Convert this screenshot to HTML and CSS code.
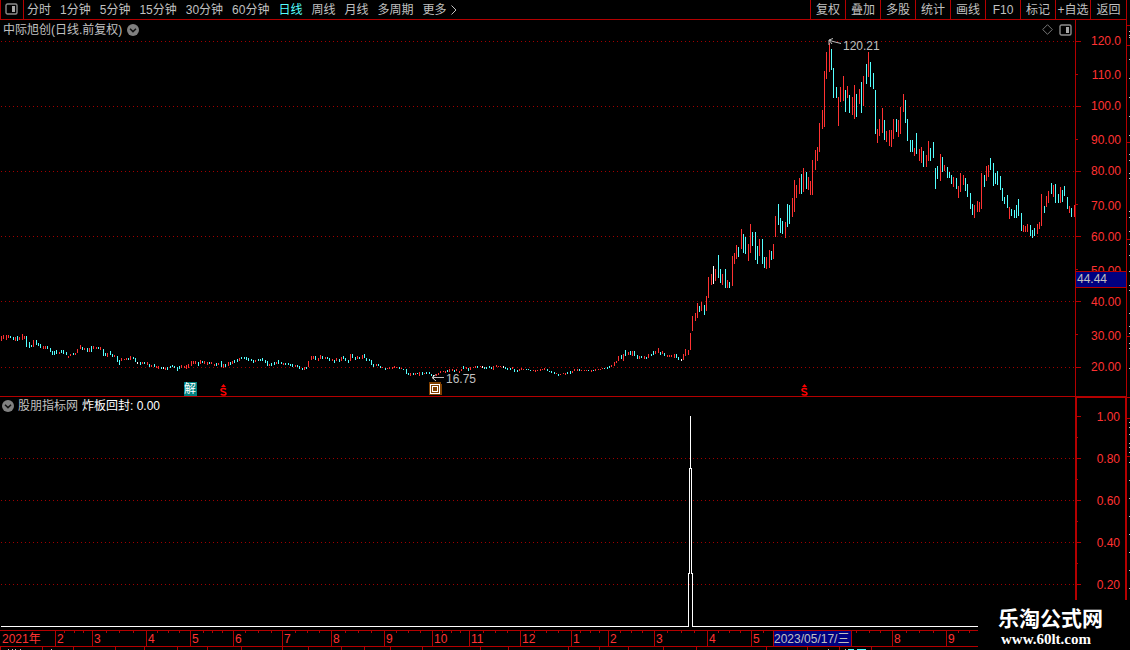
FILE: index.html
```html
<!DOCTYPE html>
<html lang="zh-CN">
<head>
<meta charset="utf-8">
<title>中际旭创 日线</title>
<link rel="stylesheet" href="styles.css">
</head>
<body>
<div class="terminal">
  <header class="toolbar">
    <button class="layout-toggle" type="button" aria-label="布局">
      <svg width="13" height="12" viewBox="0 0 13 12"><rect x="1" y="1" width="11" height="10" rx="1.5" fill="none" stroke="#8c8c8c" stroke-width="1.4"/><rect x="7" y="3" width="3" height="6" fill="#a8a8a8"/></svg>
    </button>
    <nav class="periods">
      <button type="button">分时</button>
      <button type="button">1分钟</button>
      <button type="button">5分钟</button>
      <button type="button">15分钟</button>
      <button type="button">30分钟</button>
      <button type="button">60分钟</button>
      <button type="button" class="active">日线</button>
      <button type="button">周线</button>
      <button type="button">月线</button>
      <button type="button">多周期</button>
      <button type="button" class="more">更多<svg width="6" height="10" viewBox="0 0 6 10"><path d="M.5 .5 5 5 .5 9.500" fill="none" stroke="#c0c0c0"/></svg></button>
    </nav>
    <div class="tools">
      <button type="button">复权</button>
      <button type="button">叠加</button>
      <button type="button">多股</button>
      <button type="button">统计</button>
      <button type="button">画线</button>
      <button type="button">F10</button>
      <button type="button">标记</button>
      <button type="button">+自选</button>
      <button type="button">返回</button>
    </div>
  </header>

  <main class="price">
    <svg class="plot" viewBox="0 20 1075 376" preserveAspectRatio="none" shape-rendering="crispEdges">
      <path class="grid" d="M1 41.500H1075M1 106.500H1075M1 171.500H1075M1 236.500H1075M1 301.500H1075M1 367.500H1075"/>
      <path id="up" fill="#ff3232"/>
      <path id="down" fill="#54ffff"/>
      <path id="flat" fill="#ffffff"/>
    </svg>
    <div class="caption">
      <h1>中际旭创(日线.前复权)</h1>
      <button class="round" type="button" aria-label="展开"><svg width="12" height="12" viewBox="0 0 12 12"><circle cx="6" cy="6" r="6" fill="#808080"/><path d="M3 4.800 6 7.600 9 4.800" fill="none" stroke="#111" stroke-width="1.500"/></svg></button>
      <div class="corner">
        <svg width="11" height="11" viewBox="0 0 11 11"><path d="M5.500 .7 10.300 5.500 5.500 10.300 .7 5.500Z" fill="none" stroke="#777"/></svg>
        <svg width="13" height="12" viewBox="0 0 13 12"><rect x="1" y="1" width="11" height="10" rx="1.500" fill="none" stroke="#8c8c8c" stroke-width="1.400"/><rect x="7" y="3" width="3" height="6" fill="#a8a8a8"/></svg>
      </div>
    </div>
    <div class="note high"><svg width="13" height="8" viewBox="0 0 13 8" fill="none" stroke="#c0c0c0"><path d="M1 2 5 3.500 13 5.500M1 7V2L5 .5M1 2 4 6"/></svg>120.21</div>
    <div class="note low"><svg width="13" height="8" viewBox="0 0 13 8" fill="none" stroke="#c0c0c0"><path d="M1 3.500H13M5 .5 1 3.500 5 7"/></svg>16.75</div>
    <span class="mark unlock">解</span>
    <svg class="mark dollar first" viewBox="0 0 7 12"><path d="M3.500 0 6 3H1Z" fill="#f00"/><path d="M6 5.500C5 4 1 4 1 6S6 7.500 6 9.500 2 11.500 1 10" fill="none" stroke="#f00" stroke-width="1.600"/></svg>
    <svg class="mark dollar second" viewBox="0 0 7 12"><path d="M3.500 0 6 3H1Z" fill="#f00"/><path d="M6 5.500C5 4 1 4 1 6S6 7.500 6 9.500 2 11.500 1 10" fill="none" stroke="#f00" stroke-width="1.600"/></svg>
    <svg class="mark report" viewBox="0 0 13 13" shape-rendering="crispEdges"><path d="M0 0H12V2H13V13H0Z" fill="#804000"/><path d="M1.500 2.500H10.500V11.500H1.500ZM3.500 4.500H8.500V9.500H3.500Z" fill="none" stroke="#fff"/></svg>
  </main>

  <aside class="scale price-scale">
    <svg class="plot" viewBox="1076 20 50 376" preserveAspectRatio="none" shape-rendering="crispEdges" stroke="#b40000"><path d="M1076 41.500h5M1076 106.500h5M1076 171.500h5M1076 236.500h5M1076 301.500h5M1076 367.500h5M1076 74.500h2M1076 139.500h2M1076 204.500h2M1076 269.500h2M1076 334.500h2"/></svg>
    <ol class="prices">
      <li>120.0</li><li>110.0</li><li>100.0</li><li>90.00</li><li>80.00</li><li>70.00</li><li>60.00</li><li>50.00</li><li>40.00</li><li>30.00</li><li>20.00</li>
    </ol>
    <output class="cursor-price">44.44</output>
  </aside>

  <section class="indicator">
    <svg class="plot" viewBox="0 397 1075 233" preserveAspectRatio="none" shape-rendering="crispEdges" fill="none">
      <path class="grid" d="M1 458.500H1075M1 500.500H1075M1 542.500H1075M1 584.500H1075"/>
      <path stroke="#fff" d="M1 626.500H688.500V573.500H689.500V468.500H690.500V416M690.500 468.500H691.500V573.500H692.500V626.500H1075"/>
    </svg>
    <div class="caption">
      <button class="round" type="button" aria-label="指标菜单"><svg width="12" height="12" viewBox="0 0 12 12"><circle cx="6" cy="6" r="6" fill="#808080"/><path d="M3 4.800 6 7.600 9 4.800" fill="none" stroke="#111" stroke-width="1.500"/></svg></button>
      <h2>股朋指标网</h2>
      <span class="reading">炸板回封: 0.00</span>
    </div>
  </section>

  <aside class="scale indicator-scale">
    <svg class="plot" viewBox="1075 396 52 234" preserveAspectRatio="none" shape-rendering="crispEdges" stroke="#b40000"><path d="M1077 416.500h4M1077 458.500h4M1077 500.500h4M1077 542.500h4M1077 584.500h4M1077 437.500h1M1077 479.500h1M1077 521.500h1M1077 563.500h1"/></svg>
    <ol class="levels"><li>1.00</li><li>0.80</li><li>0.60</li><li>0.40</li><li>0.20</li></ol>
  </aside>

  <div class="dates">
    <svg class="plot" viewBox="0 631 1127 15" preserveAspectRatio="none" shape-rendering="crispEdges" stroke="#b40000"><path id="day-ticks"/></svg>
    <ol class="months">
      <li>2021年</li><li>2</li><li>3</li><li>4</li><li>5</li><li>6</li><li>7</li><li>8</li><li>9</li><li>10</li><li>11</li><li>12</li><li>1</li><li>2</li><li>3</li><li>4</li><li>5</li><li class="picked">2023/05/17/三</li><li></li><li>8</li><li>9</li>
    </ol>
  </div>

  <div class="next-row">
    <svg class="plot" viewBox="0 647 1127 3" preserveAspectRatio="none" shape-rendering="crispEdges"><path id="tab-ticks" stroke="#b40000"/><path d="M8.500 649v1M12.500 649v1M15.500 649v1M20.500 649v1M51.500 649v1M828.500 649v1M845.500 649v1" stroke="#c0c0c0"/><path d="M848 649.500h6M857 649.500h9" stroke="#54ffff"/></svg>
  </div>

  <div class="edge">
    <svg class="plot" viewBox="1127 0 3 650" preserveAspectRatio="none" shape-rendering="crispEdges"><path id="edge-red" stroke="#b40000"/><path id="edge-white" stroke="#c0c0c0"/></svg>
  </div>

  <footer class="brand">
    <strong>乐淘公式网</strong>
    <a href="#">www.60lt.com</a>
  </footer>
</div>
<script src="chart.js"></script>
</body>
</html>
```
FILE: styles.css
```css
* {
  box-sizing: border-box;
}

body {
  margin: 0;
  background: #000;
  color: #c0c0c0;
  font: 12px/16px "Liberation Sans", "Noto Sans CJK SC", sans-serif;
}

button {
  margin: 0;
  padding: 0;
  border: 0;
  background: none;
  color: inherit;
  font: inherit;
  white-space: nowrap;
}

ol {
  margin: 0;
  padding: 0;
  list-style: none;
}

h1,
h2 {
  margin: 0;
  font-size: 12px;
  font-weight: normal;
}

svg {
  display: block;
  flex: none;
}

.terminal {
  position: relative;
  display: grid;
  grid-template-columns: 1fr 52px 3px;
  grid-template-rows: 20px 376fr 234fr 17px 3px;
  height: 100vh;
  min-height: 400px;
  overflow: hidden;
}

.toolbar {
  grid-column: 1 / 3;
  display: flex;
  border-right: 1px solid #b40000;
  border-bottom: 1px solid #b40000;
}

.layout-toggle {
  display: flex;
  width: 24px;
  padding: 3px 0 0 4px;
  border-left: 1px solid #b40000;
  border-right: 1px solid #b40000;
}

.periods {
  display: flex;
  gap: 9px;
  flex: 1;
  padding-left: 3px;
}

.periods .active {
  color: #54ffff;
}

.more {
  display: flex;
  align-items: center;
  gap: 4px;
}

.tools {
  display: flex;
}

.tools button {
  width: 35px;
  border-left: 1px solid #b40000;
}

.tools button:last-child {
  width: 36px;
}

.price,
.scale,
.indicator,
.dates,
.next-row,
.edge {
  position: relative;
  min-height: 0;
}

.plot {
  position: absolute;
  inset: 0;
  width: 100%;
  height: 100%;
}

.grid {
  stroke: #a00000;
  stroke-dasharray: 1 3;
}

.caption {
  position: relative;
  display: flex;
  align-items: center;
  height: 19px;
  padding-left: 3px;
  gap: 5px;
}

.corner {
  display: flex;
  align-items: center;
  gap: 6px;
  margin-left: auto;
  padding-right: 3px;
}

.note {
  position: absolute;
  display: flex;
  gap: 2px;
}

.high {
  left: 828px;
  top: 18px;
}

.low {
  left: 431px;
  top: 351px;
}

.low svg {
  margin-top: 3px;
}

.mark {
  position: absolute;
}

.unlock {
  left: 184px;
  bottom: 0;
  width: 13px;
  height: 14px;
  background: #008080;
  color: #fff;
  line-height: 14px;
}

.dollar {
  bottom: 0;
  width: 7px;
  height: 12px;
}

.first {
  left: 220px;
}

.second {
  left: 801px;
}

.report {
  left: 429px;
  bottom: 1px;
  width: 13px;
  height: 13px;
}

.scale {
  color: #ff3232;
  text-align: right;
}

.price-scale {
  border-left: 1px solid #b40000;
  border-right: 1px solid #b40000;
}

.scale ol {
  display: flex;
  flex-direction: column;
  height: 100%;
  padding-right: 5px;
}

.scale li {
  display: flex;
  flex: 1;
  align-items: center;
  justify-content: flex-end;
}

.prices {
  padding-top: 5px;
  padding-bottom: 13px;
}

.prices li:nth-child(even) {
  padding-top: 3px;
}

.cursor-price {
  position: absolute;
  left: 0;
  right: 0;
  top: 251px;
  padding-left: 1px;
  border-top: 1px solid #b40000;
  border-bottom: 1px solid #b40000;
  background: #000080;
  color: #c0c0c0;
  line-height: 15px;
  text-align: left;
}

.indicator {
  border-top: 1px solid #b40000;
}

.indicator .caption {
  height: 17px;
  padding-left: 2px;
  gap: 4px;
}

.reading {
  color: #fff;
}

.indicator-scale {
  border: 2px solid #b40000;
  border-bottom: 0;
}

.indicator-scale .plot {
  inset: -2px;
  width: calc(100% + 4px);
  height: calc(100% + 2px);
}

.levels {
  margin-top: -2px;
  padding-bottom: 22px;
}

.dates {
  grid-column: 1 / 3;
  border-top: 1px solid #b40000;
  border-bottom: 1px solid #b40000;
}

.months {
  position: relative;
  display: grid;
  grid-template-columns: 55fr 37fr 54fr 44fr 43fr 49fr 49fr 53fr 48fr 37fr 51fr 51fr 37fr 46fr 53fr 44fr 22fr 78fr 41fr 54fr 181fr;
  height: 15px;
  color: #ff3232;
  line-height: 17px;
  white-space: nowrap;
}

.months li {
  height: 15px;
  padding-left: 1px;
  border-left: 1px solid #b40000;
}

.months li:first-child {
  border-left-color: transparent;
}

.months .picked {
  padding-left: 0;
  background: #000080;
  color: #c0c0c0;
}

.next-row {
  grid-column: 1 / 3;
}

.edge {
  grid-column: 3;
  grid-row: 1 / 6;
}

.brand {
  position: absolute;
  right: 0;
  bottom: 0;
  display: flex;
  flex-direction: column;
  width: 152px;
  height: 50px;
  padding: 7px 0 0 20px;
  background: #000;
  color: #fff;
}

.brand strong {
  font-size: 21px;
  line-height: 24px;
}

.brand a {
  padding-left: 3px;
  color: inherit;
  font: bold 15px/16px "Liberation Serif", serif;
  text-decoration: none;
}
```
FILE: chart.js
```js
// Daily bars: direction (r up, c down, w unchanged) + x, high, low in plot units.
const bars = `
r1,336,341 r3,335,339 r6,335,340 r8,335,338 c10,336,338 c13,337,340 r15,337,341 c17,336,341 r19,337,340 r22,334,340
r24,336,339 c26,336,347 c29,342,348 c31,345,347 r33,340,347 c36,340,345 c38,343,346 c40,344,348 r43,346,349 r45,346,349
c47,346,349 c50,348,352 c52,351,355 c54,351,355 c56,350,354 r59,352,354 c61,350,353 c63,350,354 c66,352,355 r68,356,358
r70,354,356 c73,353,355 r75,353,355 r77,349,353 r80,345,349 c82,347,350 r84,348,350 c87,348,352 r89,348,352 c91,346,352
r93,346,349 r96,347,349 c98,347,349 r100,347,350 c103,349,356 c105,353,356 r107,353,357 c110,351,355 c112,354,357 r114,355,357
c117,356,362 c119,360,365 r121,358,361 r124,359,360 r126,358,360 c128,358,360 r130,356,360 c133,357,359 c135,358,362 w137,362,364
c140,362,365 r142,362,364 c144,362,364 r147,362,365 c149,364,367 r151,365,367 c154,364,367 r156,366,368 r158,366,369 c161,367,369
w163,367,369 r165,368,370 c167,367,370 c170,366,368 c172,365,367 c174,366,368 c177,367,371 c179,366,369 r181,365,368 r184,366,368
r186,365,369 r188,364,368 r191,361,366 r193,361,364 r195,361,364 c198,362,366 r200,360,364 c202,361,363 r204,361,364 r207,362,365
c209,362,364 r211,362,364 r214,364,366 c216,363,366 r218,363,365 c221,361,367 r223,364,368 c225,364,367 r228,362,366 c230,362,365
r232,361,364 c234,360,363 c237,359,362 r239,358,361 c241,357,359 c244,357,359 c246,357,360 c248,358,361 c251,359,361 c253,360,363
r255,360,362 c258,359,361 c260,359,361 c262,358,361 c265,360,363 c267,361,366 r269,364,366 c271,363,366 c274,362,365 r276,362,364
c278,360,364 c281,362,364 r283,363,365 c285,363,365 c288,363,365 c290,364,366 c292,364,367 r295,365,367 c297,365,367 c299,366,369
c302,368,370 r304,367,370 c306,367,369 r308,361,367 r311,356,360 r313,356,359 c315,356,360 r318,358,361
r320,355,359 c322,356,359 r325,357,359 c327,357,359 c329,358,361 r332,359,361 c334,360,363 r336,358,361 c339,359,362 r341,357,361
c343,356,359 c345,358,361 c348,360,363 r350,354,361 c352,354,358 c355,357,360 r357,356,359 c359,357,359 r362,355,359 c364,354,358
c366,358,361 c369,359,361 c371,360,365 c373,364,367 r376,364,366 c378,364,366 c380,366,368 r382,367,368 c385,368,370 r387,368,369
r389,367,369 r392,367,369 r394,366,368 r396,367,368 c399,367,369 r401,368,369 c403,369,370 c406,369,374 c408,373,375 r410,373,376
c413,373,375 r415,373,375 c417,373,374 r419,372,376 c422,372,375 r424,373,374 c426,372,374 c429,372,374 c431,374,376 w433,375,379
r436,374,376 r438,373,375 r440,371,373 r443,371,372 r445,371,373 c447,370,372 r449,369,372 r452,369,371 c454,370,372 r456,369,371
r459,371,373 r461,369,371 c463,366,369 r466,367,369 c468,368,371 r470,367,370 r473,367,368 r475,366,368 c477,366,368 r480,366,367
w482,366,368 c484,367,369 c486,367,369 c489,366,368 c491,367,369 r493,366,370 r496,365,367 r498,366,367 r500,366,367 w503,366,368
c505,367,369 c507,368,370 c510,368,370 r512,367,369 c514,369,372 c517,370,372 r519,369,371 r521,368,370 r523,369,370 c526,369,370
c528,369,370 c530,370,371 r533,370,371 r535,370,372 r537,370,371 r540,369,371 r542,369,370 r544,368,370 c547,369,371 c549,371,372
c551,371,373 c554,372,374 r556,373,374 c558,374,376 r560,374,375 r563,373,374 r565,373,375 c567,372,374 c570,371,374 r572,371,373
r574,369,371 r577,369,371 c579,369,371 r581,370,371 r584,370,371 r586,370,371 c588,370,371 r591,370,372 c593,370,371 r595,369,371
r598,369,370 r600,369,370 r602,368,369 c604,368,369 c607,367,369 c609,366,368 r611,365,367 r614,362,366 r616,361,363 r618,356,361
c621,355,359 r623,354,361 c625,350,356 r628,352,355 c630,351,355 r632,351,356 c634,351,356 c637,355,359 r639,356,359 c641,356,358
r644,356,359 c646,357,359 r648,354,358 c651,354,356 c653,351,355 r655,351,354 r658,348,353 c660,352,355 r662,351,354 c664,353,356
r667,355,357 r669,355,357 r671,355,357 r674,354,358 c676,354,358 c678,357,360 w681,359,361 r683,354,360 r685,349,356 r688,350,355
r690,333,350 r692,316,331 r695,313,321 r697,303,318 c699,306,312 r701,302,311 c704,305,315 r706,296,311 r708,277,298 r711,274,285
w713,266,284 r715,269,281 c718,255,278 c720,269,283 r722,274,285 c725,269,288 r727,280,288 c729,282,288 r732,256,286 r734,253,264
r736,245,259 c738,247,257 r741,229,249 c743,234,253 c745,237,254 r748,244,261 r750,224,253 c752,232,246 c755,232,260 c757,246,264
r759,239,256 c762,239,264 c764,257,268 r766,257,269 r769,250,268 c771,251,260 r773,244,259 r775,216,237 c778,204,225 c780,218,233
c782,221,234 r785,222,238 c787,204,227 c789,205,224 r792,198,217 r794,180,212 r796,185,198 r799,178,194 c801,174,194 r803,168,192
c806,172,189 r808,177,190 r810,181,195 r812,160,195 r815,150,170 r817,147,161 r819,123,152 r822,110,129 r824,71,127 r826,52,79
r829,43,72 c831,49,70 c833,68,98 c836,87,98 r838,97,126 r840,87,102 r843,76,101 c845,90,112 r847,86,98 c849,95,113
r852,97,115 r854,85,119 c856,94,117 r859,89,104 c861,82,113 r863,76,106 c866,64,84 r868,52,77 c870,62,87 c873,73,89
c875,90,134 r877,129,143 r879,119,136 r882,108,133 c884,120,140 r886,131,142 r889,130,146 r891,130,147 r893,119,139 c896,119,132
r898,120,137 r900,107,134 r903,94,112 c905,100,123 c907,119,141 c910,140,152 c912,140,152 r914,148,156 c916,133,154 r919,149,161
r921,147,163 c923,151,167 r926,155,167 r928,141,161 c930,148,161 c933,142,158 c935,168,189 c937,166,179 r940,154,181 c942,157,172
r944,165,171 c947,167,178 c949,172,178 c951,175,184 r953,177,187 c956,178,189 r958,186,198 r960,173,192 r963,175,185 c965,178,191
c967,184,197 c970,193,209 c972,204,215 r974,205,218 r977,201,212 r979,202,212 r981,173,209 c984,175,187 r986,166,181 r988,165,177
c990,158,170 c993,163,186 c995,173,184 c997,171,185 c1000,176,190 c1002,188,201 c1004,197,204 c1007,195,208 r1009,207,219 c1011,209,216
c1014,210,218 c1016,205,218 c1018,199,216 c1021,213,231 r1023,225,232 r1025,226,232 r1027,224,232 c1030,225,236 c1032,230,238 c1034,228,236
r1037,224,234 r1039,222,229 r1041,194,226 c1044,206,213 r1046,196,207 r1048,191,203 c1051,183,194 r1053,185,197 c1055,184,203 c1058,194,203
r1060,187,203 c1062,190,202 c1064,186,196 c1067,197,209 r1069,206,213 c1071,208,217 r1074,205,217
`.trim().split(/\s+/);

const paths = { r: "", c: "", w: "" };
for (const bar of bars) {
  const [x, high, low] = bar.slice(1).split(",").map(Number);
  paths[bar[0]] += `M${x} ${high}h1V${low}h-1Z`;
}
const setPath = (id, d) => document.getElementById(id).setAttribute("d", d);
setPath("up", paths.r);
setPath("down", paths.c);
setPath("flat", paths.w);

const columns = (xs, y, length) => xs.map((x) => `M${x + 0.5} ${y}v${length}`).join("");
setPath("day-ticks", columns([64, 74, 83, 106, 119, 133, 157, 168, 179, 203, 212, 222, 245, 258, 271, 295, 307, 319, 345, 358, 371, 396, 408, 420, 442, 451, 460, 483, 495, 507, 534, 546, 558, 580, 590, 599, 620, 631, 642, 667, 681, 694, 718, 729, 740, 763, 856, 869, 880, 906, 919, 933, 958, 969], 631, 2));
setPath("tab-ticks", columns([0, 42, 73, 115, 144, 177, 207, 241, 282, 308, 341, 364, 390, 422, 480, 508, 568, 599, 628, 663, 696, 766, 807, 839, 871], 647, 3));

const rows = (ys, x, length) => ys.map((y) => `M${x} ${y + 0.5}h${length}`).join("");
setPath("edge-red", rows([25, 45, 142, 239, 336, 397, 418, 456], 1127, 3));
setPath("edge-white", rows([31, 35, 37, 59, 78, 97, 116, 135, 154, 160, 173, 178, 211, 217, 231, 244, 255, 271, 285, 290, 313, 326, 333, 343, 348, 368, 422, 427, 434, 443, 447, 452, 462, 480, 498, 516, 534, 552, 570, 588], 1129, 1));
```
